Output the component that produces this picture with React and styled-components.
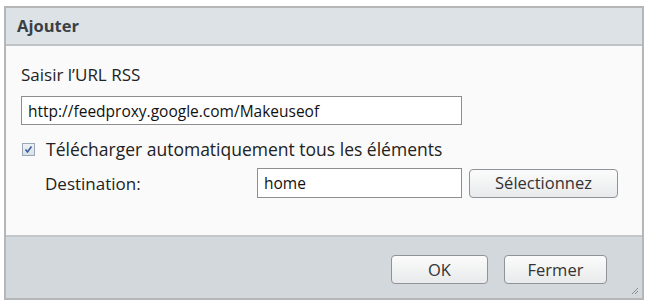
import styled, { createGlobalStyle } from "styled-components";

const GlobalStyle = createGlobalStyle`
  html, body {
    margin: 0;
    padding: 0;
    background: #ffffff;
  }
  body {
    font-family: "Open Sans", "Noto Sans", sans-serif;
    color: #222;
  }
`

const Dialog = styled.div`
  margin: 6px 0 0 4px;
  width: 640px;
  height: 294px;
  box-sizing: border-box;
  border: 2px solid #b4b6b8;
  display: flex;
  flex-direction: column;
  background: #fafafa;
`
const Header = styled.div`
  height: 38px;
  flex: none;
  box-sizing: border-box;
  background: #dde2e6;
  border-bottom: 2px solid #bfc3c6;
  display: flex;
  align-items: center;
  padding: 0 11px 2px;
  font-size: 16.5px;
  font-weight: 700;
  color: #3a3f44;
`
const Body = styled.div`
  flex: 1;
  box-sizing: border-box;
  padding: 19px 15px 0 15px;
  border-bottom: 2px solid #c3c7ca;
`
const Label = styled.div`
  font-size: 17px;
  height: 20px;
  line-height: 20px;
  color: #222;
`
const Field = styled.input`
  display: block;
  box-sizing: border-box;
  width: ${(p) => p.width}px;
  height: ${(p) => p.height}px;
  border: 1px solid #8e8e8e;
  background: #fff;
  font-family: inherit;
  font-size: 15.5px;
  color: #111;
  padding: 0 6px;
  outline: none;
`
const UrlRow = styled.div`
  margin-top: 11px;
`
const CheckRow = styled.label`
  display: flex;
  align-items: center;
  gap: 11px;
  margin-top: 14px;
  font-size: 17.5px;
  height: 20px;
  margin-left: 1px;
`
const Box = styled.span`
  width: 11px;
  height: 11px;
  border: 1px solid #9aa7b4;
  background: linear-gradient(#eef2f6, #d8e0e8);
  display: flex;
  align-items: center;
  justify-content: center;
`
const DestRow = styled.div`
  display: flex;
  align-items: center;
  margin-top: 9px;
  margin-left: 24px;
`
const DestLabel = styled.span`
  width: 212px;
  font-size: 17px;
`
const Button = styled.button`
  box-sizing: border-box;
  width: ${(p) => p.width}px;
  height: 29px;
  border: 1px solid #8f9296;
  border-radius: 4px;
  background: linear-gradient(#fbfbfb, #e8eaeb);
  font-family: inherit;
  font-size: 16.5px;
  color: #333;
  padding: 0 0 1px;
  margin-left: ${(p) => p.gap || 0}px;
`
const Footer = styled.div`
  height: 61px;
  flex: none;
  box-sizing: border-box;
  background: #d3d8dc;
  display: flex;
  justify-content: flex-end;
  align-items: center;
  gap: 16px;
  padding: 4px 35px 0 0;
  position: relative;
`
const Grip = styled.svg`
  position: absolute;
  right: 3px;
  bottom: 3px;
`

export default function App() {
  return (
    <>
      <GlobalStyle />
      <Dialog>
        <Header>Ajouter</Header>
        <Body>
          <Label>Saisir l’URL RSS</Label>
          <UrlRow>
            <Field width={441} height={29} defaultValue="http://feedproxy.google.com/Makeuseof" />
          </UrlRow>
          <CheckRow>
            <Box>
              <svg width="9" height="9" viewBox="0 0 9 9">
                <path d="M1.5 4.5 L3.5 7 L7.5 1.5" fill="none" stroke="#3b5f95" strokeWidth="1.6" />
              </svg>
            </Box>
            Télécharger automatiquement tous les éléments
          </CheckRow>
          <DestRow>
            <DestLabel>Destination:</DestLabel>
            <Field width={205} height={30} defaultValue="home" />
            <Button width={149} gap={7}>Sélectionnez</Button>
          </DestRow>
        </Body>
        <Footer>
          <Button width={97}>OK</Button>
          <Button width={103}>Fermer</Button>
          <Grip width="10" height="10" viewBox="0 0 10 10">
            <path d="M9 3 L3 9 M9 6 L6 9" stroke="#8a8d90" strokeWidth="1" />
          </Grip>
        </Footer>
      </Dialog>
    </>
  )
}
